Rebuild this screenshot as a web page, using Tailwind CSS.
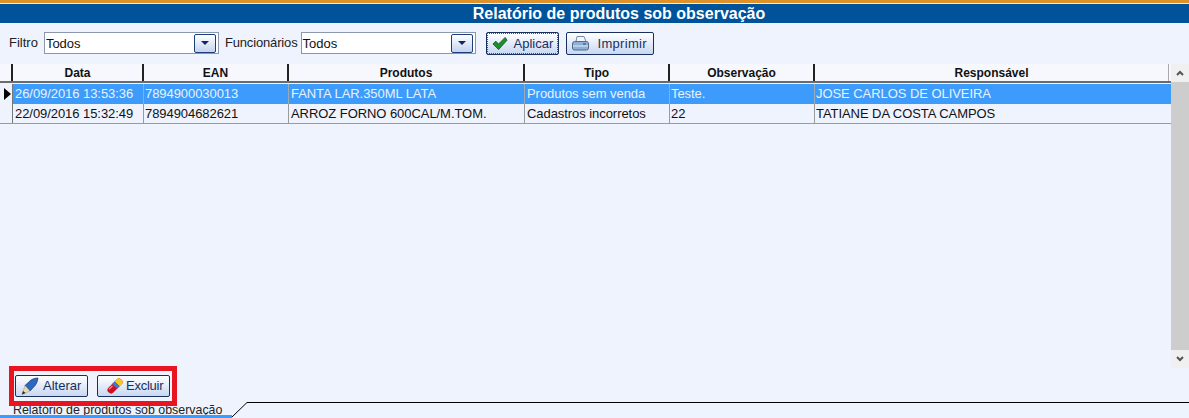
<!DOCTYPE html>
<html lang="pt">
<head>
    <meta charset="UTF-8">
    <title>Relatório de produtos sob observação</title>
    <script src="https://cdn.jsdelivr.net/npm/@tailwindcss/browser@4"></script>
</head>
<body class="w-[1189px] h-[418px] overflow-hidden bg-[#eff3fe] font-['Liberation_Sans',Arial,sans-serif] text-[13px] text-[#111] flex flex-col">
    <!-- Title bar -->
    <div class="h-[3px] bg-[#e0922a]"></div>
    <div class="h-px bg-[#f4f0e6]"></div>
    <div class="h-[19px] pl-[49px] bg-[#00529b] text-white text-[16px] font-bold text-center leading-[20px]">Relatório de produtos sob observação</div>

    <!-- Filters -->
    <div class="h-[41px] pt-[9px] pl-[9px] flex items-start">
        <span class="mt-[3px] mr-[6px] leading-[16px] text-[#222]">Filtro</span>
        <div class="w-[175px] h-[22px] bg-white border border-[#8a97ad] flex items-center justify-between pl-[1px] pr-[1px]">
            <span class="pt-px">Todos</span>
            <div class="w-[22px] h-[19px] mr-px rounded-[2px] border border-[#1c3f7c] bg-linear-to-b from-white to-[#c5d3ef] flex items-center justify-center">
                <svg width="8" height="4" viewBox="0 0 8 4"><path d="M0 0h8L4 4z" fill="#0c2a5c"/></svg>
            </div>
        </div>
        <span class="mt-[3px] ml-[6px] mr-[3px] leading-[16px] tracking-[-0.15px] text-[#222]">Funcionários</span>
        <div class="w-[175px] h-[22px] bg-white border border-[#8a97ad] flex items-center justify-between pl-[1px] pr-[1px]">
            <span class="pt-px">Todos</span>
            <div class="w-[22px] h-[19px] mr-px rounded-[2px] border border-[#1c3f7c] bg-linear-to-b from-white to-[#c5d3ef] flex items-center justify-center">
                <svg width="8" height="4" viewBox="0 0 8 4"><path d="M0 0h8L4 4z" fill="#0c2a5c"/></svg>
            </div>
        </div>
        <button class="ml-[10px] w-[73px] h-[23px] rounded-[2px] border border-[#17305e] bg-linear-to-b from-white to-[#c9d7f2] flex items-center pl-[5px] text-[#17305e] outline-1 outline-dotted outline-offset-[-2px] outline-[#7a4a20]">
            <svg width="16" height="15" viewBox="0 0 17 15" class="mr-[6px]"><path d="M1 8l3-3 3 3 7-7 2 3-9 10z" fill="#1c8f2a" stroke="#0b4d16" stroke-width="0.8"/></svg>
            Aplicar
        </button>
        <button class="ml-[7px] w-[88px] h-[23px] rounded-[2px] border border-[#17305e] bg-linear-to-b from-white to-[#c9d7f2] flex items-center pl-[5px] text-[#17305e] tracking-[0.3px]">
            <svg width="17" height="17" viewBox="0 0 17 17" class="mr-[9px]">
                <path d="M5 1.500h7l2 5H4z" fill="#f4f6fb" stroke="#7b8aa3"/>
                <path d="M2.500 6.500h12q2 0 2 2.500v4q0 2-2 2h-12q-2 0-2-2v-4q0-2.500 2-2.500z" fill="#8fb0d6" stroke="#4f6a8a"/>
                <path d="M1 11h15" stroke="#e4edf7"/>
                <path d="M11 9h3" stroke="#2c4766"/>
            </svg>
            Imprimir
        </button>
    </div>

    <!-- Grid -->
    <div class="h-[304px] flex">
        <div class="w-[1171px] flex flex-col">
            <div class="h-[19px] bg-[#f6f8fe] border-b-2 border-[#6b6b6b] flex font-bold text-[12px] leading-[18px] text-center">
                <div class="w-[13px] border-r-2 border-[#222]"></div>
                <div class="w-[131px] border-r-2 border-[#222]">Data</div>
                <div class="w-[145px] border-r-2 border-[#222]">EAN</div>
                <div class="w-[236px] border-r-2 border-[#222]">Produtos</div>
                <div class="w-[145px] border-r-2 border-[#222]">Tipo</div>
                <div class="w-[145px] border-r-2 border-[#222]">Observação</div>
                <div class="w-[354px] border-r border-[#aaa]">Responsável</div>
            </div>
            <div class="h-px"></div>
            <div class="h-[20px] flex leading-[20px] tracking-[-0.06px] text-[#e8f2ff]">
                <div class="w-[13px] border-r border-[#777] flex items-center pl-[4px]">
                    <svg width="7" height="12" viewBox="0 0 7 12"><path d="M0 0l7 6-7 6z" fill="#000"/></svg>
                </div>
                <div class="flex flex-1 bg-[#3c9bfb]">
                    <div class="w-[131px] pl-[2px] border-r border-[#9ab]">26/09/2016 13:53:36</div>
                    <div class="w-[145px] pl-px border-r border-[#9ab]">7894900030013</div>
                    <div class="w-[236px] pl-[2px] border-r border-[#9ab]">FANTA LAR.350ML LATA</div>
                    <div class="w-[145px] pl-[2px] border-r border-[#9ab]">Produtos sem venda</div>
                    <div class="w-[145px] pl-px border-r border-[#9ab]">Teste.</div>
                    <div class="flex-1 pl-px">JOSE CARLOS DE OLIVEIRA</div>
                </div>
            </div>
            <div class="h-[20px] flex leading-[20px] tracking-[-0.06px] border-b border-[#9a9a9a]">
                <div class="w-[13px] border-r border-[#777]"></div>
                <div class="w-[131px] pl-[2px] border-r border-[#9a9a9a]">22/09/2016 15:32:49</div>
                <div class="w-[145px] pl-px border-r border-[#9a9a9a]">7894904682621</div>
                <div class="w-[236px] pl-[2px] border-r border-[#9a9a9a]">ARROZ FORNO 600CAL/M.TOM.</div>
                <div class="w-[145px] pl-[2px] border-r border-[#9a9a9a]">Cadastros incorretos</div>
                <div class="w-[145px] pl-px border-r border-[#9a9a9a]">22</div>
                <div class="flex-1 pl-px">TATIANE DA COSTA CAMPOS</div>
            </div>
        </div>
        <!-- Scrollbar -->
        <div class="w-[18px] flex flex-col bg-[#cdcdcd]">
            <div class="h-[18px] bg-[#f0f0f0] flex items-center justify-center">
                <svg width="8" height="6" viewBox="0 0 8 6"><path d="M1 5l3-3 3 3" fill="none" stroke="#555" stroke-width="2"/></svg>
            </div>
            <div class="flex-1"></div>
            <div class="h-[18px] bg-[#f0f0f0] flex items-center justify-center">
                <svg width="8" height="6" viewBox="0 0 8 6"><path d="M1 1l3 3 3-3" fill="none" stroke="#555" stroke-width="2"/></svg>
            </div>
        </div>
    </div>

    <!-- Actions, with the red annotation around them -->
    <div class="h-[40px] -mt-[2px] pl-[9px] relative z-10">
        <div class="w-[168px] h-[40px] border-[5px] border-[#e8141f] flex items-center gap-[9px] pl-px">
            <button class="w-[73px] h-[22px] rounded-[2px] border border-[#17305e] bg-linear-to-b from-white to-[#c9d7f2] flex items-center pl-[5px] text-[#17305e]">
                <svg width="18" height="18" viewBox="0 0 18 18" class="mr-[4px]">
                    <path d="M4 8.500L10 3q3-2 7-2-.5 4-2.500 7l-5.500 6z" fill="#2a68c4" stroke="#12336b" stroke-width="0.7"/>
                    <path d="M4 8.500l5 5.500-8 3.500z" fill="#e9d9ae" stroke="#8a7a55" stroke-width="0.4"/>
                    <path d="M1 17.500l1-3.500 2.500 2z" fill="#222"/>
                </svg>
                Alterar
            </button>
            <button class="w-[73px] h-[22px] rounded-[2px] border border-[#17305e] bg-linear-to-b from-white to-[#c9d7f2] flex items-center pl-[8px] text-[#17305e] tracking-[-0.25px]">
                <svg width="18" height="18" viewBox="0 0 18 18" class="mr-[2px]">
                    <g transform="rotate(45 9 9)">
                        <rect x="5.500" y="0" width="7" height="18" rx="3.200" fill="#d0101c"/>
                        <path d="M5.500 3.200Q5.500 0 9 0t3.500 3.200V6h-7z" fill="#f4cb1e"/>
                        <rect x="5.500" y="6" width="7" height="3.500" fill="#3f78d0"/>
                        <rect x="6.500" y="10.500" width="1.200" height="5" rx="0.600" fill="#fff" opacity="0.6"/>
                    </g>
                </svg>
                Excluir
            </button>
        </div>
    </div>

    <!-- Tab strip -->
    <div class="flex-1 relative">
        <span class="absolute left-[13px] top-[-3px] text-[12.4px] leading-[15px] text-[#222] z-0">Relatório de produtos sob observação</span>
        <div class="absolute left-0 bottom-0 w-[232px] h-[3px] bg-[#3c9bfb]"></div>
        <svg class="absolute left-0 top-[-5px]" width="1189" height="17" viewBox="0 0 1189 17">
            <path d="M232 16L247 1.500H1189" fill="none" stroke="#000"/>
        </svg>
    </div>
</body>
</html>
